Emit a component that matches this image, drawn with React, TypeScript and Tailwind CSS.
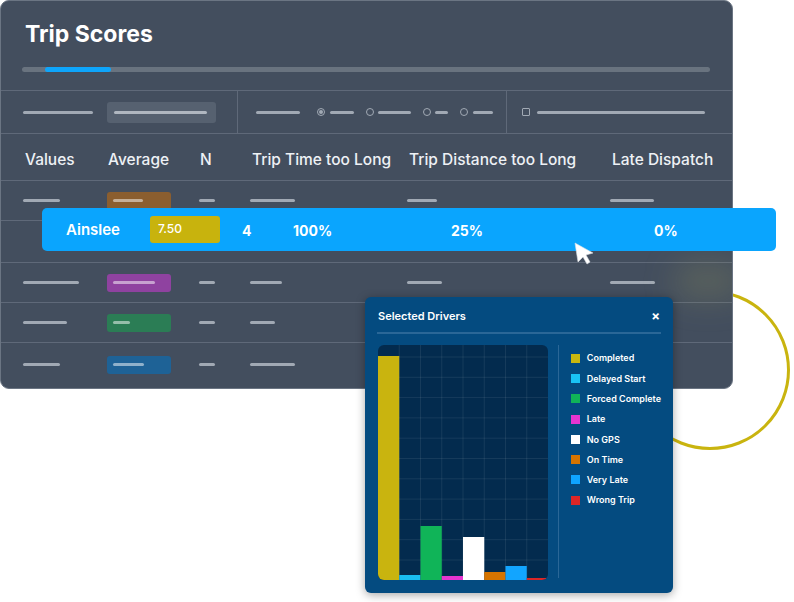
import React from "react";

const COLS = "grid grid-cols-[84px_92px_51px_157px_203px_1fr] items-center pl-[22px]";

const BARS = [
  { color: "#c9b40f", top: 11 },
  { color: "#19bdf0", top: 230 },
  { color: "#10b458", top: 181 },
  { color: "#e535d0", top: 231 },
  { color: "#ffffff", top: 192 },
  { color: "#d67400", top: 227 },
  { color: "#12a5ff", top: 221 },
  { color: "#dc2626", top: 233 },
];

const LEGEND = [
  { label: "Completed", color: "#c9b80f" },
  { label: "Delayed Start", color: "#19c3f5" },
  { label: "Forced Complete", color: "#10b458" },
  { label: "Late", color: "#e535d0" },
  { label: "No GPS", color: "#ffffff" },
  { label: "On Time", color: "#d67400" },
  { label: "Very Late", color: "#0fa4ff" },
  { label: "Wrong Trip", color: "#dc2626" },
];

type Row = {
  h: string;
  c1?: number;
  badge?: string;
  inner?: number;
  tt?: number;
  td?: number;
  ld?: number;
};

const ROWS: Row[] = [
  { h: "h-[40px]", c1: 37, badge: "#8b5e2f", inner: 30, tt: 45, td: 30, ld: 44 },
  { h: "h-[42px]" },
  { h: "h-[40px]", c1: 56, badge: "#8f42a0", inner: 42, tt: 32, td: 35, ld: 45 },
  { h: "h-[40px]", c1: 44, badge: "#2b7d55", inner: 17, tt: 25, td: 30, ld: 40 },
  { h: "h-[46px] pb-[2px]", c1: 37, badge: "#1e6296", inner: 31, tt: 45, td: 38, ld: 42 },
];

function Bar({ w, className = "" }: { w: number; className?: string }) {
  return <div className={`h-[3px] rounded-full bg-[#a1a9b4] ${className}`} style={{ width: w }} />;
}

function Radio({ on }: { on?: boolean }) {
  return (
    <div className="w-[8px] h-[8px] rounded-full border border-[#a1a9b4] flex items-center justify-center">
      {on && <div className="w-[4px] h-[4px] rounded-full bg-[#a1a9b4]" />}
    </div>
  );
}

function Chart() {
  const W = 170;
  const H = 235;
  const bw = W / 8;
  return (
    <div className="w-[170px] h-[235px] rounded-[6px] overflow-hidden bg-[#032b4e] ml-[1px]">
      <svg width={W} height={H}>
        {Array.from({ length: 7 }).map((_, i) => (
          <line key={`v${i}`} x1={bw * (i + 1)} y1={0} x2={bw * (i + 1)} y2={H} stroke="#ffffff" strokeOpacity={0.08} />
        ))}
        {Array.from({ length: 11 }).map((_, i) => (
          <line key={`h${i}`} x1={0} y1={12 + i * 20.3} x2={W} y2={12 + i * 20.3} stroke="#ffffff" strokeOpacity={0.08} />
        ))}
        {BARS.map((b, i) => (
          <rect key={i} x={i * bw} y={b.top} width={bw} height={H - b.top} fill={b.color} />
        ))}
      </svg>
    </div>
  );
}

export default function App() {
  return (
    <div className="relative w-[794px] h-[602px] bg-white overflow-hidden font-['Inter',sans-serif]">
      {/* yellow ring behind the card */}
      <div className="absolute left-[630px] top-[290px] w-[160px] h-[160px] rounded-full border-[3px] border-[#c9b40f]" />

      {/* table card */}
      <div className="relative z-10 w-[733px] h-[389px] rounded-[9px] bg-[#434e5e] border border-[#6b7583] overflow-hidden">
        <div className="absolute left-[672px] top-[262px] w-[70px] h-[36px] rounded-full bg-[#b8b25a]/20 blur-lg" />

        <div className="h-[89px] pt-[19px]">
          <div className="pl-[24px] text-[23px] leading-[28px] font-bold text-white">Trip Scores</div>
          <div className="ml-[21px] mt-[19px] w-[688px] h-[5px] rounded-full bg-[#69737f] flex">
            <div className="ml-[23px] w-[66px] h-[5px] rounded-full bg-[#0ea5fb]" />
          </div>
        </div>

        <div className="flex h-[43px] border-t border-[#5f6979]">
          <div className="w-[237px] flex items-center pl-[22px] border-r border-[#5f6979]">
            <Bar w={70} />
            <div className="ml-[14px] w-[109px] h-[21px] rounded-[3px] bg-[#566170] flex items-center pl-[7px]">
              <Bar w={93} className="bg-[#b0b7c0]" />
            </div>
          </div>
          <div className="w-[269px] flex items-center pl-[18px] border-r border-[#5f6979]">
            <Bar w={44} />
            <div className="ml-[17px]"><Radio on /></div>
            <Bar w={24} className="ml-[5px]" />
            <div className="ml-[12px]"><Radio /></div>
            <Bar w={33} className="ml-[4px]" />
            <div className="ml-[12px]"><Radio /></div>
            <Bar w={13} className="ml-[4px]" />
            <div className="ml-[12px]"><Radio /></div>
            <Bar w={20} className="ml-[5px]" />
          </div>
          <div className="flex-1 flex items-center pl-[15px]">
            <div className="w-[8px] h-[8px] rounded-[1px] border border-[#a1a9b4]" />
            <Bar w={168} className="ml-[7px]" />
          </div>
        </div>

        <div className={`${COLS} h-[47px] pt-[6px] border-t border-[#5f6979] text-[15.5px] font-medium text-[#eef1f5] whitespace-nowrap`}>
          <div className="pl-[2px]">Values</div>
          <div className="pl-[1px]">Average</div>
          <div className="pl-[1px]">N</div>
          <div className="pl-[2px]">Trip Time too Long</div>
          <div className="pl-[2px]">Trip Distance too Long</div>
          <div className="pl-[2px]">Late Dispatch</div>
        </div>

        {ROWS.map((r, i) => (
          <div key={i} className={`${COLS} ${r.h} border-t border-[#5f6979]`}>
            {r.badge ? (
              <>
                <Bar w={r.c1!} />
                <div className="w-[64px] h-[18px] rounded-[3px] flex items-center pl-[6px]" style={{ backgroundColor: r.badge }}>
                  <div className="h-[3px] rounded-full bg-white/50" style={{ width: r.inner }} />
                </div>
                <Bar w={16} />
                <Bar w={r.tt!} />
                <Bar w={r.td!} />
                <Bar w={r.ld!} />
              </>
            ) : null}
          </div>
        ))}
      </div>

      {/* highlighted row */}
      <div className="absolute z-20 left-[42px] top-[208px] w-[734px] h-[43px] rounded-[5px] bg-[#0aa5fe] text-white grid grid-cols-[84px_92px_51px_157px_203px_1fr] items-center pl-[24px]">
        <div className="text-[15px] font-semibold pt-[2px]">Ainslee</div>
        <div className="w-[70px] h-[27px] rounded-[3px] bg-[#c8b30d] pl-[8px] pt-[4px] text-[12px] font-medium">7.50</div>
        <div className="text-[14px] font-bold pt-[2px]">4</div>
        <div className="text-[14px] font-bold pt-[2px]">100%</div>
        <div className="text-[14px] font-bold pt-[2px] pl-[1px]">25%</div>
        <div className="text-[14px] font-bold pt-[2px] pl-[1px]">0%</div>
      </div>

      {/* cursor */}
      <svg className="absolute z-30 left-[574px] top-[242px]" width="22" height="24" viewBox="0 0 22 24">
        <path d="M1 1 L19 11 L12 13 L16 20 L13 22 L9 15 L4 20 Z" fill="#ffffff" stroke="#d8dde3" strokeWidth="0.6" strokeLinejoin="round" />
      </svg>

      {/* selected drivers popup */}
      <div className="absolute z-20 left-[365px] top-[297px] w-[308px] h-[296px] rounded-[6px] bg-[#044b80] px-[12px] pt-[12px] shadow-[0_2px_10px_rgba(0,0,0,0.35)]">
        <div className="flex items-center justify-between h-[14px] pl-[1px] pr-[1px] text-white">
          <span className="text-[11px] font-semibold">Selected Drivers</span>
          <span className="text-[13px] font-bold leading-none">×</span>
        </div>
        <div className="mt-[9px] h-[2px] bg-[#2a6797]" />
        <div className="mt-[11px] flex">
          <Chart />
          <div className="ml-[10px] w-[1px] h-[233px] bg-[#2a6797]" />
          <div className="ml-[12px] pt-[3px] flex flex-col">
            {LEGEND.map((l) => (
              <div key={l.label} className="h-[20.3px] flex items-center gap-[7px] whitespace-nowrap">
                <div className="w-[9px] h-[9px] shrink-0" style={{ backgroundColor: l.color }} />
                <span className="text-[9px] font-semibold text-white">{l.label}</span>
              </div>
            ))}
          </div>
        </div>
      </div>
    </div>
  );
}
